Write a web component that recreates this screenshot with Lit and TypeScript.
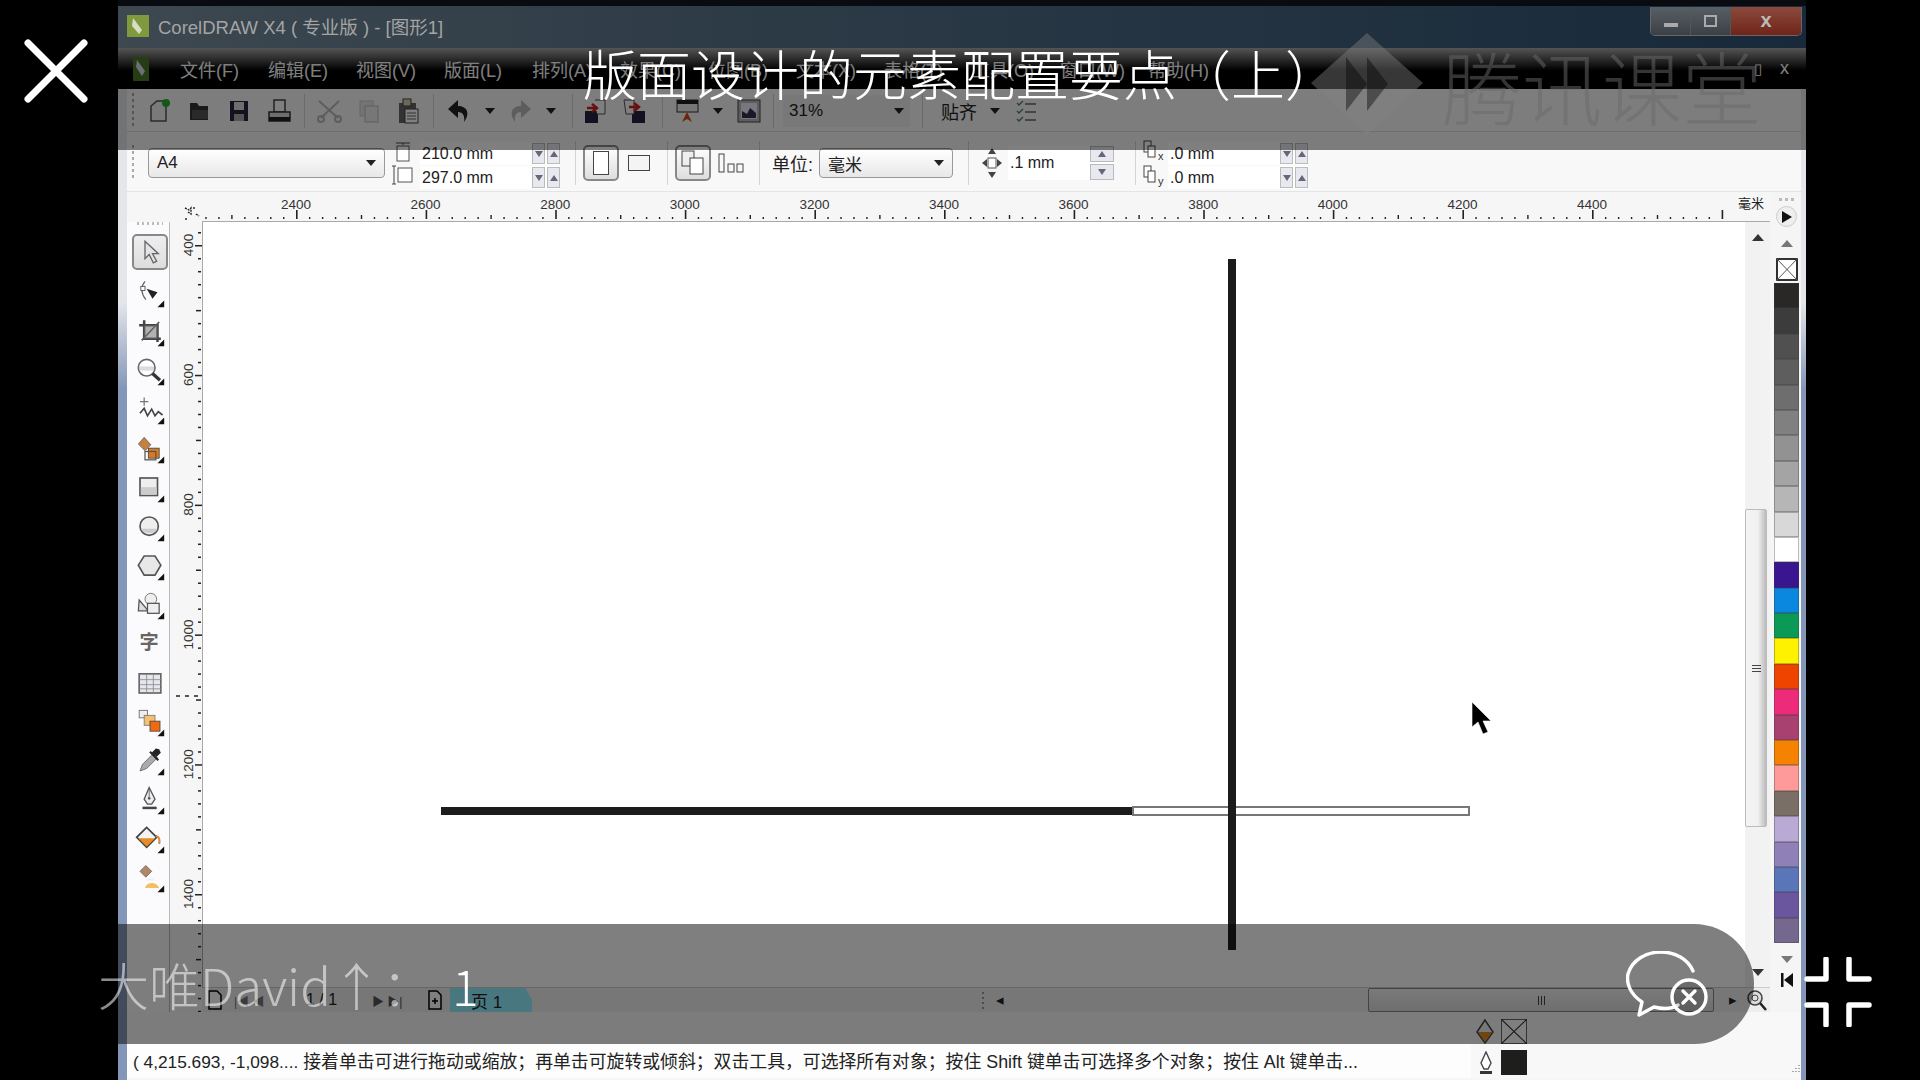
import { LitElement, html, svg, css } from "lit";
import { customElement } from "lit/decorators.js";

const MENUS = ["文件(F)", "编辑(E)", "视图(V)", "版面(L)", "排列(A)", "效果(C)", "位图(B)", "文本(X)", "表格(T)", "工具(O)", "窗口(W)", "帮助(H)"];

const SWATCHES = [
  "#2a2826", "#3c3c3c", "#505050", "#5e5e5e", "#6e6e6e", "#808080", "#929292", "#a4a4a4", "#b6b6b6",
  "#d8d8d8", "#ffffff", "#3a1590", "#0a88e0", "#0a9a55", "#fff200", "#ee4400", "#ee2a7a", "#a84070",
  "#f58200", "#ff9a9a", "#7a6f66", "#b8aad4", "#9080b8", "#5a75b8", "#6a559f", "#75688f",
];

const flyout = svg`<path d="M35 27v8h-8z" fill="#111" />`;

// toolbox icons, top to bottom
const TOOLS = [
  svg`<path d="M12 5v21l5-5 5 10 4-2-5-9h7z" fill="#e4e4e8" stroke="#666" stroke-width="1.6" />`,
  svg`<path d="M12 4c-5 6-5 14 1 22" fill="none" stroke="#666" stroke-width="1.5" /><rect x="7" y="10" width="5" height="5" fill="#fff" stroke="#444" /><path d="M14 13l13 4-6 8z" fill="#222" />${flyout}`,
  svg`<path d="M11 4v22h20M5 10h22v20" fill="none" stroke="#444" stroke-width="3" /><path d="M8 28L29 6" stroke="#555" stroke-width="2" /><rect x="11" y="10" width="16" height="16" fill="#777" opacity=".55" />${flyout}`,
  svg`<circle cx="14" cy="14" r="10" fill="#fff" stroke="#666" stroke-width="2" /><path d="M5 15h18" stroke="#ccc" stroke-width="5" opacity=".7" /><path d="M21 21l9 8" stroke="#333" stroke-width="4" />${flyout}`,
  svg`<path d="M11 3v10M6 8h10" stroke="#777" stroke-width="1.5" /><path d="M6 22l5-6 4 9 5-8 4 8 4-5 5 4" fill="none" stroke="#444" stroke-width="2" />${flyout}`,
  svg`<path d="M11 4l8 9-7 7-8-8z" fill="#c88040" stroke="#666" /><rect x="16" y="17" width="13" height="12" fill="#d87a20" stroke="#444" /><rect x="12" y="21" width="13" height="10" fill="none" stroke="#555" stroke-width="1.5" />${flyout}`,
  svg`<rect x="6" y="6" width="21" height="21" fill="#eee" stroke="#555" stroke-width="2" /><rect x="7" y="17" width="19" height="9" fill="#ccc" />${flyout}`,
  svg`<circle cx="17" cy="17" r="11" fill="#eee" stroke="#555" stroke-width="2" /><path d="M7 20h20c-2 7-17 7-20 0z" fill="#ccc" />${flyout}`,
  svg`<path d="M11 6h13l7 11-7 12H11L4 17z" fill="#e8e8e8" stroke="#555" stroke-width="2" />${flyout}`,
  svg`<circle cx="19" cy="11" r="7" fill="#eee" stroke="#666" /><path d="M5 12l11 13H4z" fill="#ddd" stroke="#555" stroke-width="1.5" /><rect x="15" y="16" width="14" height="12" fill="#eee" stroke="#555" stroke-width="1.5" />${flyout}`,
  svg`<text x="17" y="24" text-anchor="middle" font-size="23" font-weight="700" fill="#666" font-family="Noto Sans CJK SC">字</text>`,
  svg`<rect x="5" y="7" width="26" height="23" fill="#e6e6ee" stroke="#666" stroke-width="2" /><path d="M5 14h26M5 20h26M5 25h26M14 7v23M22 7v23" stroke="#888" />`,
  svg`<rect x="5" y="4" width="10" height="9" fill="#eee" stroke="#666" /><rect x="11" y="10" width="13" height="12" fill="#f4c070" stroke="#777" /><rect x="18" y="17" width="12" height="12" fill="#f06a10" stroke="#444" />${flyout}`,
  svg`<path d="M6 30l3-8 13-13 5 5-13 13z" fill="#aaa" stroke="#666" /><path d="M20 8l5-5 4 1 2 4-5 5z" fill="#222" /><path d="M18 7l10 10" stroke="#222" stroke-width="2.5" />${flyout}`,
  svg`<path d="M17 3l-6 14 4 6h5l4-6z" fill="#eee" stroke="#555" stroke-width="1.6" /><path d="M17 4v11" stroke="#555" /><circle cx="17" cy="16" r="1.6" fill="#555" /><rect x="9" y="26" width="17" height="3" fill="#444" />${flyout}`,
  svg`<path d="M14 4L2 16l12 12 12-12z" fill="#f3f3f3" stroke="#444" stroke-width="2" /><path d="M4 17h20L14 27z" fill="#ea8a20" /><path d="M25 14c4 1 5 5 4 10" fill="none" stroke="#d88a40" stroke-width="2.5" />${flyout}`,
  svg`<path d="M13 3l7 7-7 7-7-7z" fill="#b08868" stroke="#666" /><path d="M12 30c2-8 14-8 17 0z" fill="#f2c060" /><path d="M14 20h8" stroke="#eee" stroke-width="2" />${flyout}`,
];

// main toolbar icons
const ico = {
  fresh: svg`<path d="M5 24V9l6-5h9v20z" fill="#f4f4f4" stroke="#555" stroke-width="1.5" /><circle cx="20" cy="6" r="4" fill="#2bb02b" />`,
  open: svg`<path d="M4 23V6h7l2 3h9v14z" fill="#333" /><path d="M6 13h16v9H6z" fill="#555" />`,
  save: svg`<path d="M5 4h18v20H5z" fill="#262640" /><rect x="9" y="5" width="10" height="8" fill="#ddd" /><rect x="9" y="17" width="10" height="7" fill="#aaa" />`,
  print: svg`<rect x="9" y="3" width="11" height="12" fill="#fff" stroke="#444" stroke-width="1.5" /><rect x="4" y="15" width="21" height="9" fill="#ddd" stroke="#333" stroke-width="1.5" /><rect x="4" y="20" width="21" height="4" fill="#222" />`,
  cut: svg`<path d="M4 4l19 17M24 4L6 21" stroke="#bbb" stroke-width="2" /><circle cx="6" cy="22" r="3" fill="none" stroke="#bbb" stroke-width="2" /><circle cx="23" cy="22" r="3" fill="none" stroke="#bbb" stroke-width="2" />`,
  copy: svg`<rect x="5" y="4" width="13" height="15" fill="#e8e8e8" stroke="#ccc" /><rect x="10" y="9" width="13" height="16" fill="#eee" stroke="#bbb" />`,
  paste: svg`<rect x="5" y="6" width="17" height="20" fill="#666" /><rect x="9" y="2" width="8" height="7" fill="#d8d0b0" stroke="#444" /><rect x="11" y="12" width="13" height="14" fill="#fff" stroke="#444" /><path d="M13 16h9M13 19h9M13 22h9" stroke="#666" />`,
  undo: svg`<path d="M13 3L3 12l10 9v-6c5 0 7 4 6 10 6-8 4-16-6-16z" fill="#222" />`,
  redo: svg`<path d="M15 3l10 9-10 9v-6c-5 0-7 4-6 10-6-8-4-16 6-16z" fill="#bbb" />`,
  imp: svg`<rect x="4" y="14" width="13" height="12" fill="#224" /><path d="M14 3h10v14h-8" fill="#fff" stroke="#555" /><path d="M6 11h9M11 7l5 4-5 4" fill="none" stroke="#d02020" stroke-width="2.4" />`,
  exp: svg`<rect x="12" y="14" width="13" height="12" fill="#224" /><path d="M4 3h10v14H6z" fill="#fff" stroke="#555" /><path d="M9 10h9M14 6l5 4-5 4" fill="none" stroke="#d02020" stroke-width="2.4" />`,
  app: svg`<rect x="4" y="3" width="21" height="12" fill="#eee" stroke="#333" /><rect x="4" y="3" width="21" height="4" fill="#222" /><path d="M14 15l-5 10 5-3 5 3z" fill="#d84a10" />`,
  pub: svg`<rect x="4" y="3" width="22" height="22" fill="#bbb" stroke="#444" /><rect x="7" y="6" width="16" height="16" fill="#eef" /><path d="M8 21v-7l5 3 3-6 6 5v5z" fill="#335" />`,
  opts: svg`<path d="M5 6l2 2 4-4M5 14l2 2 4-4M5 22l2 2 4-4" fill="none" stroke="#486" stroke-width="1.4" /><path d="M13 7h11M13 15h11M13 23h11" stroke="#666" stroke-width="1.4" />`,
};

const arrow = html`<svg class="arrow" width="10" height="6" viewBox="0 0 10 6"><path d="M0 0h10L5 6z" fill="#222" /></svg>`;
const icon = (p: unknown) => html`<span class="tb"><svg width="28" height="28" viewBox="0 0 28 28">${p}</svg></span>`;
const drop = html`<span class="tb-drop">${arrow}</span>`;

const grip = html`<svg class="grip" width="4" height="36" viewBox="0 0 4 36">
  ${[0, 6, 12, 18, 24, 30].map((y) => svg`<rect x="1" y=${y} width="2" height="3" fill="#aaa" />`)}
</svg>`;

const spin = html`<span class="spin">
  <span class="spin-btn"><svg width="8" height="6" viewBox="0 0 8 6"><path d="M0 0h8L4 6z" fill="#667" /></svg></span>
  <span class="spin-btn"><svg width="8" height="6" viewBox="0 0 8 6"><path d="M0 6h8L4 0z" fill="#667" /></svg></span>
</span>`;

@customElement("app-root")
export class AppRoot extends LitElement {
  hruler() {
    const ticks = [];
    for (let i = -12; i < 118; i++) {
      const x = 296 - 127 + i * 12.96;
      const major = i % 10 === 0;
      if (x < 76 || x > 1600) continue;
      ticks.push(svg`<rect x=${x} y=${major ? 18 : i % 5 === 0 ? 23 : 25} width=${major ? 1.6 : 1.4} height=${major ? 9 : i % 5 === 0 ? 4 : 2} fill="#222" />`);
      // the last major tick has no number, the unit sits there instead
      if (major && x < 1580) {
        ticks.push(svg`<text x=${x} y="17" text-anchor="middle" font-size="13.5" fill="#333">${2400 + i * 20}</text>`);
      }
    }
    return html`<svg class="hruler" width="1643" height="30" viewBox="0 0 1643 30" font-family="Liberation Sans">
      <path d="M58 16l4 2 2-2v6l-3-2M67 15v3M69 22l3 2M59 26v3" fill="none" stroke="#222" stroke-width="1.4" stroke-dasharray="2 1" />
      ${ticks}
      <text x="1624" y="16" text-anchor="middle" font-size="13" fill="#222" font-family="Noto Sans CJK SC">毫米</text>
      <rect x="75" y="29" width="1568" height="1" fill="#aaa" />
    </svg>`;
  }

  vruler() {
    const ticks = [];
    for (let i = -1; i < 60; i++) {
      const y = 245 - 222 + i * 12.98;
      const major = i % 10 === 0;
      ticks.push(svg`<rect x=${major ? 25 : i % 5 === 0 ? 26 : 28} y=${y} width=${major ? 7 : i % 5 === 0 ? 5 : 3} height="1.5" fill="#222" />`);
      if (major) {
        ticks.push(svg`<text transform="translate(23 ${y}) rotate(-90)" text-anchor="middle" font-size="13.5" fill="#333">${400 + i * 20}</text>`);
      }
    }
    return html`<svg class="vruler" width="32" height="790" viewBox="0 0 32 790" font-family="Liberation Sans">
      ${ticks}
      <path d="M6 474h24" stroke="#222" stroke-width="1.4" stroke-dasharray="4 5" />
    </svg>`;
  }

  render() {
    return html`
      <div class="screen">
        <div class="window">
          <div class="titlebar">
            <svg class="app-ico" width="22" height="22" viewBox="0 0 22 22">
              <rect width="22" height="22" fill="#7f9a3c" />
              <path d="M6 3l9 12-3 4-7-8z" fill="#d8dcc8" />
            </svg>
            <span class="title-text">CorelDRAW X4 ( 专业版 ) - [图形1]</span>
            <div class="win-btns">
              <span class="win-btn"><i class="w-min"></i></span>
              <span class="win-btn"><i class="w-max"></i></span>
              <span class="win-btn close">x</span>
            </div>
          </div>

          <div class="menubar">
            <svg class="doc-ico" width="16" height="24" viewBox="0 0 16 24">
              <rect width="16" height="24" fill="#4a7a2a" />
              <path d="M4 3l8 11-3 5-6-9z" fill="#dde" />
            </svg>
            <div class="menus">${MENUS.map((m) => html`<span>${m}</span>`)}</div>
            <span class="doc-ctl">▯</span><span class="doc-ctl x">x</span>
          </div>

          <div class="toolbar">
            ${grip}
            ${icon(ico.fresh)}${icon(ico.open)}${icon(ico.save)}${icon(ico.print)}
            <i class="sep"></i>
            ${icon(ico.cut)}${icon(ico.copy)}${icon(ico.paste)}
            <i class="sep"></i>
            ${icon(ico.undo)}${drop}${icon(ico.redo)}${drop}
            <i class="sep sep-a"></i>
            ${icon(ico.imp)}${icon(ico.exp)}
            <i class="sep sep-b"></i>
            ${icon(ico.app)}${drop}${icon(ico.pub)}
            <i class="sep sep-e"></i>
            <span class="zoom-combo"><span>31%</span>${arrow}</span>
            <i class="sep sep-c"></i>
            <span class="snap">贴齐</span>
            ${drop}
            ${icon(ico.opts)}
          </div>

          <div class="propbar">
            ${grip}
            <span class="select paper"><span>A4</span>${arrow}</span>
            <span class="dim-icons">
              <svg width="22" height="20" viewBox="0 0 22 20"><path d="M4 1h14M11 1v2" stroke="#444" /><rect x="5" y="4" width="12" height="15" fill="#fff" stroke="#555" /></svg>
              <svg width="22" height="20" viewBox="0 0 22 20"><path d="M2 1v18M0 1h4M0 19h4" stroke="#444" /><rect x="6" y="3" width="14" height="14" fill="#fff" stroke="#555" /></svg>
            </span>
            <span class="boxes">
              <span class="box"><span>210.0 mm</span>${spin}</span>
              <span class="box"><span>297.0 mm</span>${spin}</span>
            </span>
            <i class="sep sep-tall"></i>
            <span class="toggle on"><svg width="16" height="24" viewBox="0 0 16 24"><rect x=".5" y=".5" width="15" height="23" fill="#fff" stroke="#444" /></svg></span>
            <span class="cell"><svg width="22" height="16" viewBox="0 0 22 16"><rect x=".5" y=".5" width="21" height="15" fill="#f4f4f4" stroke="#444" /></svg></span>
            <i class="sep sep-tall"></i>
            <span class="toggle on narrow"><svg width="24" height="26" viewBox="0 0 24 26"><rect x="1" y="1" width="12" height="15" fill="#eee" stroke="#444" /><rect x="9" y="8" width="13" height="16" fill="#fff" stroke="#444" /></svg></span>
            <span class="cell"><svg width="26" height="20" viewBox="0 0 26 20"><rect x="1" y="1" width="5" height="18" fill="none" stroke="#444" /><rect x="10" y="11" width="6" height="8" fill="none" stroke="#444" /><rect x="19" y="11" width="6" height="8" fill="none" stroke="#444" /></svg></span>
            <i class="sep sep-tall"></i>
            <span class="unit-label">单位:</span>
            <span class="select unit"><span>毫米</span>${arrow}</span>
            <i class="sep sep-tall"></i>
            <svg class="nudge-ico" width="22" height="30" viewBox="0 0 22 30">
              <path d="M11 0l4 6H7zM11 30l-4-6h8zM1 15l5-4v8zM21 15l-5-4v8z" fill="#444" />
              <rect x="7" y="10" width="8" height="10" fill="#fff" stroke="#555" />
            </svg>
            <span class="nudge">
              <span>.1 mm</span>
              <span class="spin vert">
                <span class="spin-btn"><svg width="10" height="6" viewBox="0 0 8 6"><path d="M0 6h8L4 0z" fill="#667" /></svg></span>
                <span class="spin-btn"><svg width="10" height="6" viewBox="0 0 8 6"><path d="M0 0h8L4 6z" fill="#667" /></svg></span>
              </span>
            </span>
            <i class="sep sep-tall sep-d"></i>
            <span class="dim-icons dup">
              <svg width="24" height="22" viewBox="0 0 24 22"><rect x="1" y="1" width="7" height="11" fill="#fff" stroke="#444" /><rect x="5" y="6" width="7" height="11" fill="#fff" stroke="#444" /><text x="15" y="20" font-size="11" fill="#333" font-family="Liberation Sans">x</text></svg>
              <svg width="24" height="22" viewBox="0 0 24 22"><rect x="1" y="1" width="7" height="11" fill="#fff" stroke="#444" /><rect x="5" y="6" width="7" height="11" fill="#fff" stroke="#444" /><text x="15" y="20" font-size="11" fill="#333" font-family="Liberation Sans">y</text></svg>
            </span>
            <span class="boxes">
              <span class="box"><span>.0 mm</span>${spin}</span>
              <span class="box"><span>.0 mm</span>${spin}</span>
            </span>
          </div>

          <div class="work">
            <div class="left-part">
              ${this.hruler()}
              <div class="mid">
                <div class="toolbox">
                  <svg class="tool-grip" width="26" height="3" viewBox="0 0 26 3">
                    ${[0, 5, 10, 15, 20, 25].map((x) => svg`<rect x=${x} width="2" height="3" fill="#bbb" />`)}
                  </svg>
                  ${TOOLS.map(
                    (t, i) => html`<span class="tool ${i === 0 ? "active" : ""}"><svg width="36" height="36" viewBox="0 0 36 36">${t}</svg></span>`
                  )}
                </div>
                ${this.vruler()}
                <div class="canvas-col">
                  <div class="canvas-row">
                    <div class="canvas">
                      <div class="line-h"></div>
                      <div class="line-hollow"></div>
                      <div class="line-v"></div>
                      <svg class="cursor" width="20" height="34" viewBox="0 0 20 34"><path d="M1 1v25l6-5 5 12 5-2-5-11h8z" fill="#000" stroke="#fff" stroke-width=".6" /></svg>
                    </div>
                    <div class="vscroll">
                      <svg width="12" height="7" viewBox="0 0 12 7"><path d="M0 7h12L6 0z" fill="#333" /></svg>
                      <div class="vthumb"><i></i><i></i><i></i></div>
                      <svg width="12" height="7" viewBox="0 0 12 7"><path d="M0 0h12L6 7z" fill="#333" /></svg>
                    </div>
                  </div>
                  <div class="pagebar">
                    <span class="page-nav">
                      <svg width="14" height="20" viewBox="0 0 14 20"><path d="M1 1h8l4 4v14H1z" fill="#fff" stroke="#000" stroke-width="1.5" /></svg>
                      <span class="nav-marks">|◀ ◀</span>
                      <span class="page-num">1 / 1</span>
                      <span class="nav-marks fwd">▶ ▶|</span>
                      <svg width="14" height="20" viewBox="0 0 14 20"><path d="M1 1h8l4 4v14H1z" fill="#fff" stroke="#000" stroke-width="1.5" /><path d="M4 11h6M7 8v6" stroke="#000" stroke-width="1.5" /></svg>
                    </span>
                    <span class="page-tab">页 1</span>
                    <span class="hdots"><i></i><i></i><i></i><i></i></span>
                    <span class="hscroll-arrow">◂</span>
                    <span class="hthumb"><i></i><i></i><i></i></span>
                    <span class="hscroll-arrow right">▸</span>
                    <svg class="zoom-ico" width="20" height="22" viewBox="0 0 20 22"><circle cx="8" cy="9" r="7" fill="#ddd" stroke="#444" stroke-width="1.6" /><circle cx="8" cy="9" r="3" fill="none" stroke="#444" /><path d="M13 14l6 7" stroke="#222" stroke-width="2.6" /></svg>
                  </div>
                </div>
              </div>
            </div>

            <div class="palette">
              <svg class="pal-dots" width="16" height="3" viewBox="0 0 16 3"><rect width="3" height="3" fill="#bbb" /><rect x="6" width="3" height="3" fill="#bbb" /><rect x="12" width="3" height="3" fill="#bbb" /></svg>
              <span class="pal-play"><svg width="10" height="12" viewBox="0 0 10 12"><path d="M0 0l10 6-10 6z" fill="#111" /></svg></span>
              <svg class="pal-up" width="12" height="7" viewBox="0 0 12 7"><path d="M0 7h12L6 0z" fill="#777" /></svg>
              <svg class="pal-none" width="22" height="24" viewBox="0 0 22 24"><rect x="1" y="1" width="20" height="21" fill="#fff" stroke="#000" stroke-width="1.6" /><path d="M1 1l20 21M21 1L1 22" stroke="#555" /></svg>
              <div class="swatches">${SWATCHES.map((c) => html`<i style="background:${c}"></i>`)}</div>
              <svg class="pal-down" width="12" height="7" viewBox="0 0 12 7"><path d="M0 0h12L6 7z" fill="#777" /></svg>
              <svg class="pal-rew" width="12" height="14" viewBox="0 0 12 14"><rect width="2.5" height="14" fill="#111" /><path d="M12 0v14L3 7z" fill="#111" /></svg>
            </div>
          </div>

          <div class="bottom">
            <span class="status"><span class="coords">( 4,215.693, -1,098....</span> 接着单击可进行拖动或缩放；再单击可旋转或倾斜；双击工具，可选择所有对象；按住 Shift 键单击可选择多个对象；按住 Alt 键单击...</span>
            <div class="indicators">
              <svg width="20" height="26" viewBox="0 0 20 26"><path d="M9 2L1 14l8 11 8-11z" fill="#eee" stroke="#444" stroke-width="1.5" /><path d="M2 14h14l-7 10z" fill="#e08a20" /></svg>
              <svg class="ind-box" width="26" height="25" viewBox="0 0 26 25"><rect x=".5" y=".5" width="25" height="24" fill="#fff" stroke="#666" /><path d="M0 0l26 25M26 0L0 25" stroke="#333" stroke-width="1.2" /></svg>
              <svg width="14" height="24" viewBox="0 0 14 24"><path d="M7 1L2 12l3 6h4l3-6z" fill="#fff" stroke="#444" stroke-width="1.4" /><rect x="1" y="20" width="12" height="3" fill="#333" /></svg>
              <i class="ind-fill"></i>
            </div>
            <svg class="size-grip" width="12" height="12" viewBox="0 0 12 12"><path d="M10 2v1M7 5v1M10 5v1M4 8v1M7 8v1M10 8v1" stroke="#aaa" stroke-width="2" /></svg>
          </div>
        </div>

        <div class="scrim-top">
          <svg class="mark-logo" width="112" height="102" viewBox="0 0 112 102">
            <path d="M56 0l56 50-56 52L0 50z" fill="rgba(130,130,130,.42)" />
            <path d="M35 24l21 27-21 27zM56 24l21 27-21 27z" fill="rgba(0,0,0,.4)" />
          </svg>
          <span class="mark-text">腾讯课堂</span>
          <span class="caption">版面设计的元素配置要点（上）</span>
        </div>

        <svg class="close-x" width="64" height="64" viewBox="0 0 64 64">
          <path d="M4 4l56 56M60 4L4 60" stroke="#fff" stroke-width="7" stroke-linecap="round" />
        </svg>

        <div class="pill">
          <span class="who">大唯David↑：</span>
          <span class="count">1</span>
          <svg class="chat" width="82" height="66" viewBox="0 0 82 66">
            <path d="M52 54c-6 4-16 4-24 2L13 64l3-13C4 43 0 32 2 23 6 9 20 1 35 1c14 0 27 7 32 19" fill="none" stroke="#fff" stroke-width="3.4" stroke-linecap="round" stroke-linejoin="round" />
            <circle cx="63" cy="46" r="17" fill="rgba(0,0,0,.15)" stroke="#fff" stroke-width="3.4" />
            <path d="M57 40l12 12M69 40L57 52" stroke="#fff" stroke-width="3.4" stroke-linecap="round" />
          </svg>
        </div>

        <svg class="shrink" width="72" height="70" viewBox="0 0 72 70">
          <path d="M6 22h19V2M48 2v20h20M6 48h19v20M68 48H48v20" fill="none" stroke="#fff" stroke-width="5.5" stroke-linecap="round" stroke-linejoin="round" />
        </svg>
      </div>
    `;
  }

  static styles = css`
    :host {
      display: block;
      width: 1920px;
      height: 1080px;
      font-family: "Liberation Sans", "Noto Sans CJK SC", sans-serif;
      color: #222;
    }
    i {
      display: block;
    }
    .screen {
      position: relative;
      width: 1920px;
      height: 1080px;
      background: #000;
      overflow: hidden;
    }
    .window {
      margin-left: 118px;
      width: 1688px;
      height: 1080px;
      box-sizing: border-box;
      border-left: 9px solid #8496b8;
      border-right: 5px solid #8a8a90;
      border-image: linear-gradient(#e4e6ea 28%, #8496b8 36%, #8496b8) 1;
      display: flex;
      flex-direction: column;
      background: #f6f6f6;
    }

    /* title */
    .titlebar {
      height: 48px;
      flex: none;
      box-sizing: border-box;
      border-top: 6px solid #080c10;
      margin-left: -9px;
      margin-right: -5px;
      padding: 0 4px 3px 9px;
      display: flex;
      align-items: center;
      background: linear-gradient(90deg, #3d4850, #2c3a46 40%, #17293a);
      color: #a4a4a4;
      font-size: 18.5px;
    }
    .app-ico {
      margin-right: 9px;
    }
    .win-btns {
      margin-left: auto;
      margin-top: -9px;
      display: flex;
      height: 28px;
      border: 1px solid #666;
      border-top: 0;
      border-radius: 0 0 5px 5px;
      overflow: hidden;
    }
    .win-btn {
      width: 39px;
      background: linear-gradient(#585f64, #3b4046);
      border-right: 1px solid #555;
      display: flex;
      align-items: center;
      justify-content: center;
    }
    .win-btn.close {
      width: 70px;
      background: linear-gradient(#8a4a3c, #70241a);
      color: #bbb;
      font-size: 20px;
      font-weight: 700;
      border: 0;
    }
    .w-min {
      width: 14px;
      height: 4px;
      margin-top: 8px;
      background: #aaa;
    }
    .w-max {
      width: 9px;
      height: 8px;
      border: 2px solid #aaa;
    }

    /* menu */
    .menubar {
      height: 41px;
      flex: none;
      margin-left: -9px;
      margin-right: -5px;
      padding-left: 9px;
      display: flex;
      align-items: center;
      background: linear-gradient(#aaa, #000 55%);
      color: #fff;
      font-size: 18px;
    }
    .doc-ico {
      margin: 0 0 0 6px;
      flex: none;
    }
    .menus {
      display: flex;
      margin-left: 31px;
      gap: 27px;
    }
    .menus span {
      width: 61px;
      white-space: nowrap;
    }
    .doc-ctl {
      margin-left: auto;
      font-size: 15px;
    }
    .doc-ctl.x {
      margin-left: 18px;
      margin-right: 17px;
      font-size: 18px;
    }

    /* toolbars */
    .toolbar {
      height: 43px;
      flex: none;
      display: flex;
      align-items: center;
      background: #fafafa;
      border-bottom: 1px solid #ddd;
      box-sizing: border-box;
      padding: 2px 0 0 4px;
    }
    .grip {
      flex: none;
      margin-right: 5.5px;
    }
    .tb {
      flex: none;
      width: 39.5px;
      display: flex;
      justify-content: center;
    }
    .tb-drop {
      flex: none;
      width: 22px;
      display: flex;
      justify-content: center;
    }
    .sep {
      flex: none;
      width: 1px;
      height: 34px;
      margin: 0 5px;
      background: #d4d4d4;
    }
    .sep-a {
      margin: 0 2px 0 10px;
    }
    .sep-b {
      margin: 0 4px 0 8px;
    }
    .sep-c {
      margin: 0 18px 0 12px;
    }
    .sep-e {
      margin: 0 9px 0 5px;
    }
    .zoom-combo {
      width: 127px;
      height: 32px;
      flex: none;
      box-sizing: border-box;
      padding: 0 6px;
      display: flex;
      align-items: center;
      justify-content: space-between;
      font-size: 17px;
      border-radius: 3px;
      background: #f0f0f0;
    }
    .snap {
      font-size: 18px;
      width: 43px;
      flex: none;
    }
    .propbar {
      height: 60px;
      flex: none;
      display: flex;
      align-items: center;
      background: #f8f8f8;
      border-bottom: 1px solid #e4e4e4;
      box-sizing: border-box;
      padding: 3px 0 0 4px;
    }
    .propbar .grip {
      margin-right: 13px;
    }
    .select {
      flex: none;
      height: 30px;
      box-sizing: border-box;
      padding: 0 8px;
      display: flex;
      align-items: center;
      justify-content: space-between;
      border: 1px solid #999;
      border-radius: 4px;
      background: linear-gradient(#fff, #e8e8e8);
      font-size: 17px;
    }
    .paper {
      width: 237px;
    }
    .unit {
      width: 134px;
    }
    .dim-icons {
      flex: none;
      width: 35px;
      display: flex;
      flex-direction: column;
      align-items: center;
      gap: 3px;
    }
    .dim-icons.dup {
      width: 26px;
    }
    .boxes {
      flex: none;
      width: 140px;
      display: flex;
      flex-direction: column;
      gap: 1px;
      margin-top: 5px;
      font-size: 16px;
    }
    .box {
      height: 23px;
      display: flex;
      align-items: center;
      justify-content: space-between;
      background: #fff;
      padding-left: 2px;
      white-space: nowrap;
    }
    .spin {
      display: flex;
      gap: 2px;
    }
    .spin-btn {
      width: 11px;
      height: 19px;
      display: flex;
      align-items: center;
      justify-content: center;
      background: #e8e8f0;
      border: 1px solid #bbb;
    }
    .sep-tall {
      height: 44px;
      margin: 0 7px 0 15px;
    }
    .toggle {
      flex: none;
      width: 36px;
      height: 36px;
      display: flex;
      align-items: center;
      justify-content: center;
      box-sizing: border-box;
      border: 2px solid #888;
      border-radius: 5px;
      background: linear-gradient(#fff, #ddd);
    }
    .cell {
      flex: none;
      width: 40px;
      margin-right: -7px;
      display: flex;
      justify-content: center;
    }
    .unit-label {
      flex: none;
      font-size: 18px;
      width: 47px;
      margin-left: 5px;
    }
    .nudge-ico {
      flex: none;
      margin: 0 5px;
    }
    .nudge {
      flex: none;
      width: 106px;
      height: 34px;
      display: flex;
      align-items: center;
      justify-content: space-between;
      background: #fff;
      padding-left: 2px;
      box-sizing: border-box;
      font-size: 16px;
    }
    .spin.vert {
      flex-direction: column;
    }
    .spin.vert .spin-btn {
      width: 22px;
      height: 14px;
    }
    .sep-d {
      margin-left: 21px;
      margin-right: 6px;
    }

    /* work area */
    .work {
      height: 820px;
      flex: none;
      display: flex;
    }
    .left-part {
      width: 1643px;
      flex: none;
      display: flex;
      flex-direction: column;
    }
    .hruler {
      display: block;
      flex: none;
    }
    .mid {
      flex: 1;
      display: flex;
      min-height: 0;
    }
    .toolbox {
      width: 43px;
      flex: none;
      display: flex;
      flex-direction: column;
      align-items: center;
      box-sizing: border-box;
      padding-left: 4px;
      background: #fbfbfd;
      border-right: 1px solid #bbb;
    }
    .tool-grip {
      flex: none;
      margin-bottom: 9px;
    }
    .tool {
      flex: none;
      width: 36px;
      height: 39px;
      display: flex;
      align-items: center;
      justify-content: center;
      box-sizing: border-box;
    }
    .tool svg {
      width: 30px;
      height: 30px;
    }
    .tool.active {
      border: 2px solid #888;
      border-radius: 5px;
      height: 36px;
      margin-bottom: 3px;
      background: linear-gradient(#eee, #ddd);
    }
    .vruler {
      display: block;
      flex: none;
      background: #f6f6f6;
    }
    .canvas-col {
      flex: 1;
      display: flex;
      flex-direction: column;
      min-width: 0;
    }
    .canvas-row {
      height: 765px;
      flex: none;
      display: flex;
    }
    .canvas {
      position: relative;
      width: 1543px;
      flex: none;
      background: #fff;
      border-left: 1px solid #aaa;
      box-sizing: border-box;
    }
    .line-h {
      position: absolute;
      left: 238px;
      top: 585px;
      width: 692px;
      height: 8px;
      background: #1c1c1c;
    }
    .line-hollow {
      position: absolute;
      left: 929px;
      top: 584px;
      width: 338px;
      height: 10px;
      box-sizing: border-box;
      border: 2px solid #777;
      background: #fff;
    }
    .line-v {
      position: absolute;
      left: 1025px;
      top: 37px;
      width: 8px;
      height: 691px;
      background: #1c1c1c;
    }
    .cursor {
      position: absolute;
      left: 1268px;
      top: 479px;
    }
    .vscroll {
      flex: none;
      width: 25px;
      box-sizing: border-box;
      padding-top: 12px;
      padding-bottom: 11px;
      display: flex;
      flex-direction: column;
      align-items: center;
      background: #f2f2f2;
    }
    .vthumb {
      margin-top: 268px;
      margin-bottom: auto;
      align-self: flex-start;
      width: 22px;
      height: 318px;
      box-sizing: border-box;
      border: 1px solid #bbb;
      border-radius: 2px;
      background: linear-gradient(90deg, #f4f4f4, #f0f0f0 60%, #bbb);
      display: flex;
      flex-direction: column;
      align-items: center;
      justify-content: center;
      gap: 2px;
    }
    .vthumb i {
      width: 9px;
      height: 1px;
      background: #444;
    }
    .pagebar {
      height: 25px;
      flex: none;
      display: flex;
      align-items: stretch;
      background: #eee;
      border-top: 1px solid #ccc;
      box-sizing: border-box;
      font-size: 17px;
    }
    .page-nav {
      width: 248px;
      flex: none;
      display: flex;
      align-items: center;
      box-sizing: border-box;
      padding-left: 6px;
    }
    .nav-marks {
      font-size: 12px;
      color: #777;
      width: 72px;
      margin-left: 12px;
      white-space: nowrap;
    }
    .nav-marks.fwd {
      color: #555;
      width: 56px;
      margin-left: 10px;
    }
    .page-num {
      width: 56px;
      white-space: nowrap;
      font-size: 16px;
    }
    .page-tab {
      width: 82px;
      flex: none;
      box-sizing: border-box;
      padding-left: 21px;
      display: flex;
      align-items: center;
      background: #92eeff;
      clip-path: polygon(0 0, 92% 0, 100% 50%, 100% 100%, 0 100%);
    }
    .hdots {
      margin-left: 437px;
      width: 27px;
      flex: none;
      display: flex;
      flex-direction: column;
      align-items: center;
      justify-content: center;
      gap: 3px;
    }
    .hdots i {
      width: 2px;
      height: 2px;
      background: #999;
    }
    .hscroll-arrow {
      display: flex;
      align-items: center;
      font-size: 15px;
      color: #222;
      width: 10px;
    }
    .hscroll-arrow.right {
      margin-left: 15px;
    }
    .hthumb {
      margin-left: 362px;
      width: 346px;
      flex: none;
      box-sizing: border-box;
      border: 1px solid #888;
      border-radius: 2px;
      background: linear-gradient(#f4f4f4, #ddd);
      display: flex;
      align-items: center;
      justify-content: center;
      gap: 2px;
    }
    .hthumb i {
      width: 1px;
      height: 9px;
      background: #444;
    }
    .zoom-ico {
      flex: none;
      align-self: center;
      margin-left: 8px;
    }

    /* colour palette */
    .palette {
      width: 30px;
      flex: none;
      box-sizing: border-box;
      padding-left: 3px;
      display: flex;
      flex-direction: column;
      align-items: center;
      background: #f5f5f5;
    }
    .pal-dots {
      margin-top: 6px;
      flex: none;
    }
    .pal-play {
      flex: none;
      width: 21px;
      height: 21px;
      margin-top: 5px;
      border-radius: 50%;
      border: 1px solid #ccc;
      background: #eee;
      display: flex;
      align-items: center;
      justify-content: center;
      box-sizing: border-box;
    }
    .pal-up {
      flex: none;
      margin-top: 13px;
    }
    .pal-none {
      flex: none;
      margin-top: 11px;
    }
    .swatches {
      margin-top: 1px;
      width: 25px;
      display: flex;
      flex-direction: column;
    }
    .swatches i {
      height: 25.4px;
      box-sizing: border-box;
      border: 1px solid rgba(60, 60, 60, 0.35);
    }
    .pal-down {
      flex: none;
      margin-top: 13px;
    }
    .pal-rew {
      flex: none;
      margin-top: 10px;
    }

    /* status */
    .bottom {
      height: 66px;
      flex: none;
      display: flex;
      align-items: flex-end;
      background: #f8f8f8;
    }
    .status {
      flex: 1;
      height: 34px;
      line-height: 36px;
      padding-left: 6px;
      font-size: 17.85px;
      white-space: nowrap;
      background: #fdfdfd;
    }
    .coords {
      font-size: 17.3px;
    }
    .indicators {
      flex: none;
      width: 56px;
      margin-right: 262px;
      margin-bottom: 3px;
      display: grid;
      grid-template-columns: 30px 26px;
      justify-items: center;
      align-items: center;
      row-gap: 6px;
    }
    .ind-box {
      display: block;
    }
    .ind-fill {
      width: 26px;
      height: 25px;
      background: #1e1e1c;
    }
    .size-grip {
      flex: none;
      margin-bottom: 3px;
    }

    /* video player overlay */
    .scrim-top {
      position: absolute;
      left: 0;
      top: 48px;
      width: 100%;
      height: 102px;
      background: rgba(0, 0, 0, 0.5);
    }
    .caption {
      position: absolute;
      left: 583px;
      top: -11px;
      font-size: 54px;
      line-height: 72px;
      color: #fff;
      font-family: "Noto Sans CJK SC", sans-serif;
      font-weight: 300;
      white-space: nowrap;
    }
    .mark-logo {
      position: absolute;
      left: 1311px;
      top: -15px;
    }
    .mark-text {
      position: absolute;
      left: 1442px;
      top: -14px;
      font-size: 80px;
      line-height: 100px;
      color: rgba(105, 105, 105, 0.5);
      font-family: "Noto Sans CJK SC", sans-serif;
      font-weight: 300;
      white-space: nowrap;
    }
    .close-x {
      position: absolute;
      left: 24px;
      top: 39px;
    }
    .pill {
      position: absolute;
      left: 116px;
      top: 924px;
      width: 1638px;
      height: 120px;
      background: rgba(0, 0, 0, 0.5);
      border-radius: 0 60px 60px 0;
      display: flex;
      align-items: center;
    }
    .who {
      margin-left: -18px;
      font-size: 51px;
      font-family: "Noto Sans CJK SC", "Liberation Sans", sans-serif;
      font-weight: 300;
      color: rgba(255, 255, 255, 0.55);
      white-space: nowrap;
      width: 354px;
      flex: none;
    }
    .count {
      font-size: 50px;
      color: #fff;
      font-family: "Noto Sans CJK SC", sans-serif;
      font-weight: 300;
    }
    .chat {
      margin-left: auto;
      margin-right: 46px;
      flex: none;
    }
    .shrink {
      position: absolute;
      left: 1801px;
      top: 957px;
    }
  `;
}
